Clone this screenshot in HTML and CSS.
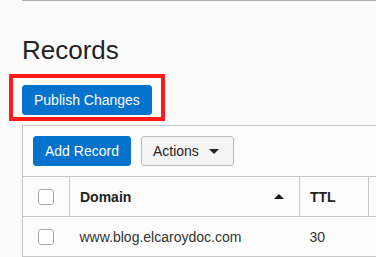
FILE: index.html
```html
<!DOCTYPE html>
<html lang="en">
<head>
    <meta charset="UTF-8">
    <meta name="viewport" content="width=device-width, initial-scale=1.0">
    <title>Records</title>
    <link rel="stylesheet" href="styles.css">
</head>
<body>
    <div class="page">
        <div class="top-rule"></div>
        <h1>Records</h1>

        <div class="highlight">
            <button class="btn btn-primary">Publish Changes</button>
        </div>

        <div class="panel">
            <div class="toolbar">
                <button class="btn btn-primary">Add Record</button>
                <button class="btn btn-default">Actions <span class="caret"></span></button>
            </div>

            <table class="records">
                <thead>
                    <tr>
                        <th class="col-check"><span class="checkbox"></span></th>
                        <th class="col-domain">
                            <div class="th-inner">Domain <span class="sort-up"></span></div>
                        </th>
                        <th class="col-ttl">TTL</th>
                        <th class="col-type"></th>
                    </tr>
                </thead>
                <tbody>
                    <tr>
                        <td class="col-check"><span class="checkbox"></span></td>
                        <td>www.blog.elcaroydoc.com</td>
                        <td>30</td>
                        <td>A</td>
                    </tr>
                </tbody>
            </table>
        </div>
    </div>
</body>
</html>
```

FILE: styles.css
```css
html, body {
    margin: 0;
    padding: 0;
    overflow: hidden;
}
body {
    font-family: "Liberation Sans", Arial, sans-serif;
    background: #fbfbfb;
    color: #161513;
}
.page {
    padding-left: 22px;
}
.top-rule {
    height: 1px;
    background: #aaaaaa;
    width: 400px;
}
h1 {
    font-size: 26px;
    font-weight: normal;
    line-height: 30px;
    margin: 34px 0 0 0;
    color: #222;
}

.highlight {
    display: inline-block;
    margin: 9px 0 0 -13px;
    border: 4px solid #ff1a1a;
    padding: 7px 9px 2px 9px;
}
.btn {
    font-family: inherit;
    font-size: 14px;
    height: 30px;
    padding: 0 11px;
    border-radius: 3px;
    border: 1px solid transparent;
    cursor: pointer;
    display: inline-flex;
    align-items: center;
    vertical-align: top;
}
.btn-primary {
    background: #0572ce;
    border-color: #0572ce;
    color: #fff;
}
.btn-default {
    background: #f4f4f4;
    border-color: #bcbcbc;
    color: #222;
    margin-left: 10px;
    padding-right: 14px;
}
.caret {
    display: inline-block;
    margin-left: 10px;
    border-left: 5px solid transparent;
    border-right: 5px solid transparent;
    border-top: 5px solid #222;
}

.panel {
    margin-top: 4px;
    width: 420px;
    border: 1px solid #c8c8c8;
    background: #fcfcfc;
}
.toolbar {
    display: flex;
    padding: 10px;
}
.records {
    border-collapse: collapse;
    width: 100%;
    table-layout: fixed;
    font-size: 14px;
}
.records th, .records td {
    height: 39px;
    padding: 0 10px;
    text-align: left;
    border-top: 1px solid #c8c8c8;
    border-bottom: 1px solid #c8c8c8;
    white-space: nowrap;
}
.records th {
    font-weight: bold;
    color: #222;
    border-left: 1px solid #c8c8c8;
}
.records th:first-child {
    border-left: none;
}
.records td {
    color: #333;
}
.records .col-check {
    width: 26px;
    padding: 0 10px;
    text-align: center;
}
.col-domain {
    width: 209px;
}
.col-ttl {
    width: 48px;
}
.th-inner {
    display: flex;
    align-items: center;
    justify-content: space-between;
    padding-right: 5px;
}
.sort-up {
    display: inline-block;
    border-left: 5px solid transparent;
    border-right: 5px solid transparent;
    border-bottom: 5px solid #161513;
}
.checkbox {
    display: inline-block;
    width: 14px;
    height: 14px;
    border: 1px solid #a8a8a8;
    border-radius: 3px;
    background: #fff;
    vertical-align: middle;
}
```
